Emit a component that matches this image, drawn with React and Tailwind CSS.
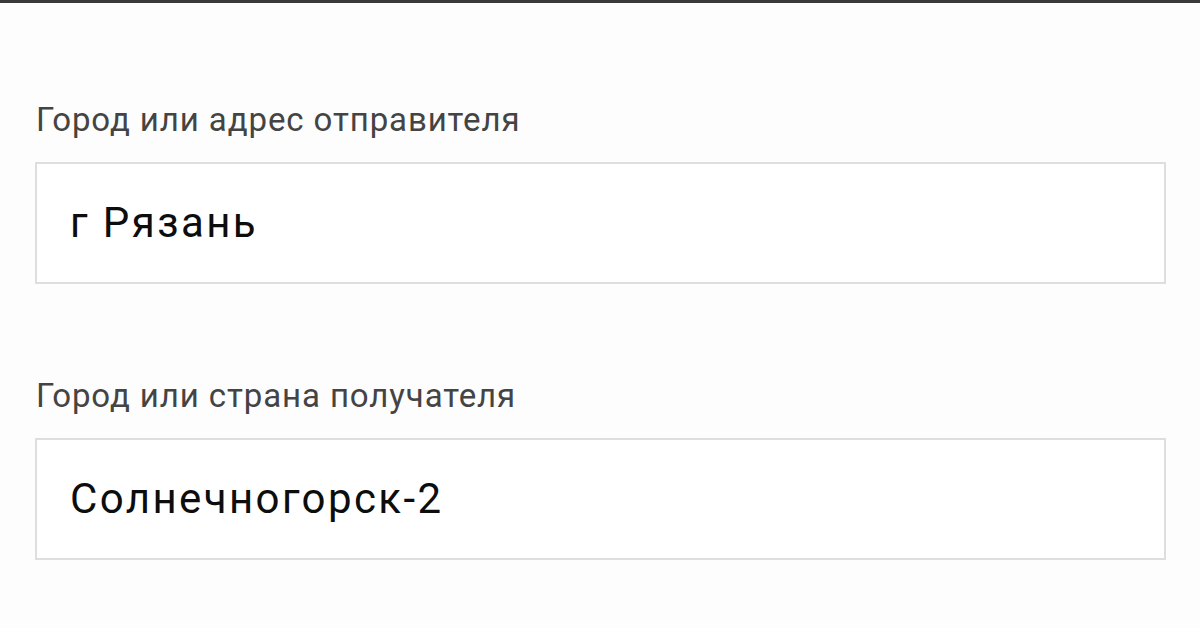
import React from 'react';

const FIELDS = [
  {label: 'Город или адрес отправителя', value: 'г Рязань'},
  {label: 'Город или страна получателя', value: 'Солнечногорск-2'},
];

function Field({label, value}) {
  return (<div className="flex flex-col">
    <div className="text-[33px] leading-[40px] tracking-[0.9px] text-[#444] pl-[36px]">{label}</div>
    <div className="mt-[22px] ml-[35px] mr-[34px] h-[122px] border-2 border-[#dedede] bg-white flex items-center pl-[33px]">
      <span className="text-[42px] leading-[48px] tracking-[2.4px] text-[#0d0d0d]">{value}</span>
    </div>
  </div>);
}

export default function App() {
  return (<div className="w-[1200px] h-[628px] bg-[#fdfdfd] overflow-hidden" style={{fontFamily: 'Roboto, sans-serif'}}>
    <div className="h-[3px] bg-[#3a3a3a]"/>
    <div className="pt-[97px] flex flex-col gap-[92px]">
      {FIELDS.map((f) => <Field key={f.label} label={f.label} value={f.value}/>)}
    </div>
  </div>);
}
